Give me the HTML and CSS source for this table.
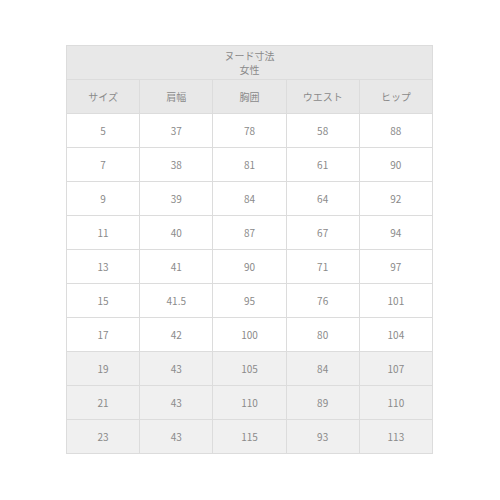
FILE: index.html
```html
<!DOCTYPE html>
<html lang="ja">
<head>
<meta charset="utf-8">
<link rel="stylesheet" href="styles.css">
</head>
<body>
<div class="wrap">
<table class="size-table">
  <thead>
    <tr><th colspan="5" class="title">ヌード寸法<br>女性</th></tr>
    <tr class="cols"><th>サイズ</th><th>肩幅</th><th>胸囲</th><th>ウエスト</th><th>ヒップ</th></tr>
  </thead>
  <tbody>
    <tr><td>5</td><td>37</td><td>78</td><td>58</td><td>88</td></tr>
    <tr><td>7</td><td>38</td><td>81</td><td>61</td><td>90</td></tr>
    <tr><td>9</td><td>39</td><td>84</td><td>64</td><td>92</td></tr>
    <tr><td>11</td><td>40</td><td>87</td><td>67</td><td>94</td></tr>
    <tr><td>13</td><td>41</td><td>90</td><td>71</td><td>97</td></tr>
    <tr><td>15</td><td>41.5</td><td>95</td><td>76</td><td>101</td></tr>
    <tr><td>17</td><td>42</td><td>100</td><td>80</td><td>104</td></tr>
    <tr class="shade"><td>19</td><td>43</td><td>105</td><td>84</td><td>107</td></tr>
    <tr class="shade"><td>21</td><td>43</td><td>110</td><td>89</td><td>110</td></tr>
    <tr class="shade"><td>23</td><td>43</td><td>115</td><td>93</td><td>113</td></tr>
  </tbody>
</table>
</div>
</body>
</html>
```
FILE: styles.css
```css
html, body {
  margin: 0;
  padding: 0;
  background: #ffffff;
}
.wrap {
  padding: 45px 0 0 66px;
}
.size-table {
  width: 367px;
  border-collapse: collapse;
  table-layout: fixed;
  font-family: "Noto Sans CJK JP", "Noto Sans", sans-serif;
  font-size: 10px;
  color: #8a8a8a;
  border: 1px solid #cfcfcf;
}
.size-table th,
.size-table td {
  border: 1px solid #dcdcdc;
  text-align: center;
  font-weight: normal;
  height: 33px;
  padding: 0;
  vertical-align: middle;
}
.size-table thead th {
  background: #e8e8e8;
}
.size-table th.title {
  line-height: 14px;
  height: 33px;
}
.size-table tr.shade td {
  background: #f0f0f0;
}
```
